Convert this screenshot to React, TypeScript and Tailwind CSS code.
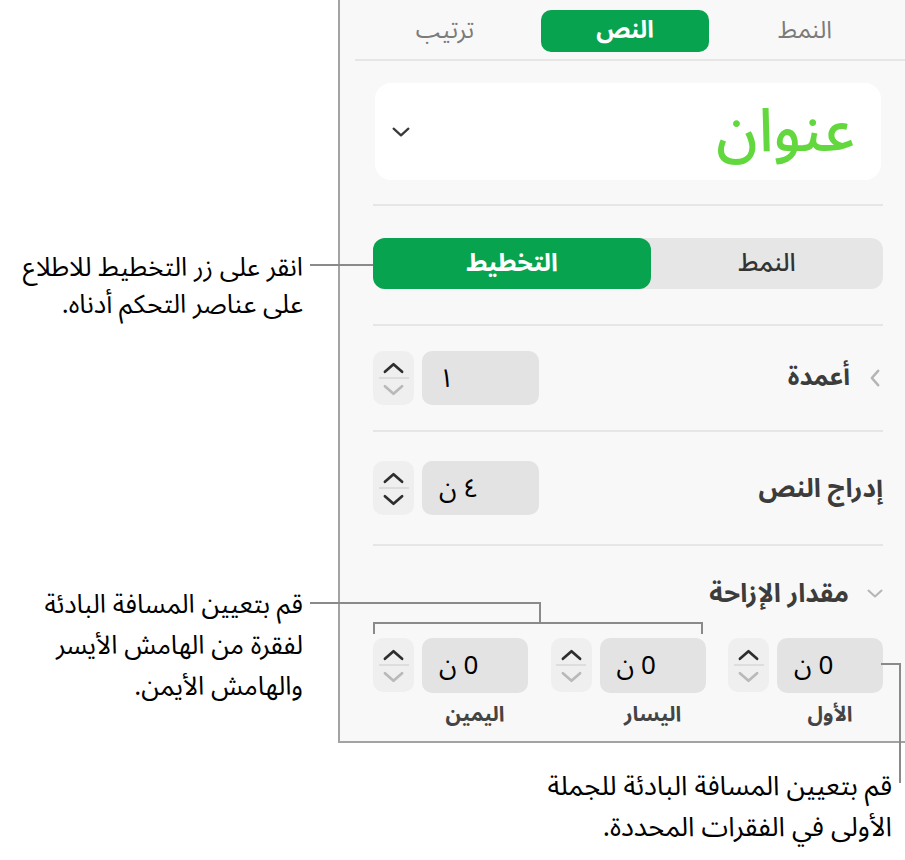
import React from 'react';

const Chevron = ({ dir, className }: { dir: 'up' | 'down' | 'left'; className?: string }) => {
    const pts =
        dir === 'up' ? '2,10 11,2 20,10' : dir === 'down' ? '2,2 11,10 20,2' : '9,2 2,10 9,18';
    const vb = dir === 'left' ? '0 0 11 20' : '0 0 22 12';
    return (
        <svg viewBox={vb} className={className} fill="none" stroke="currentColor" strokeWidth={2.8} strokeLinecap="round" strokeLinejoin="round">
            <polyline points={pts} />
        </svg>
    );
};

const Stepper = ({ downDisabled }: { downDisabled?: boolean }) => (
    <div className="w-[41px] h-[54px] rounded-[10px] bg-[#efefef] flex flex-col items-center">
        <div className="h-[26px] flex items-end pb-[3px]">
            <Chevron dir="up" className="w-[21px] h-[12px] text-[#2e2e2e]" />
        </div>
        <div className="h-[2px] w-[30px] bg-[#dddddd]" />
        <div className="flex-1 flex items-start pt-[5px]">
            <Chevron dir="down" className={`w-[21px] h-[12px] ${downDisabled ? 'text-[#b9b9b9]' : 'text-[#2e2e2e]'}`} />
        </div>
    </div>
);

const Field = ({ value }: { value: string }) => (
    <div className="w-[117px] h-[54px] rounded-[10px] bg-[#e3e3e3] flex items-center justify-end pl-[17px] text-[26px] text-black">
        {value}
    </div>
);

const Divider = ({ className }: { className?: string }) => <div className={`h-[2px] bg-[#e6e6e6] ${className || ''}`} />;

const IndentGroup = ({ label }: { label: string }) => (
    <div className="flex flex-col">
        <div className="flex gap-2">
            <div className="w-[106px] h-[55px] rounded-[10px] bg-[#e3e3e3] flex items-center justify-end pl-[17px] text-[26px] text-black">
                0 ن
            </div>
            <div className="h-[55px] flex">
                <Stepper downDisabled />
            </div>
        </div>
        <div className="w-[106px] mt-[10px] h-[24px] flex items-center justify-center text-[21px] font-bold text-[#444444]">
            {label}
        </div>
    </div>
);

export default function App() {
    return (
        <div className="relative w-[905px] h-[860px] bg-white overflow-hidden font-['Noto_Sans_Arabic','DejaVu_Sans',sans-serif]">
            {/* inspector panel */}
            <div dir="rtl" className="ml-[338px] w-[567px] h-[743px] bg-[#f8f8f8] border-l-2 border-b-2 border-[#a3a3a3]">
                <div className="ml-[15px]">
                    <div className="mr-[10px] h-[59px] pt-[10px] grid grid-cols-3">
                        <div className="h-[42px] flex items-center justify-center text-[24px] text-[#7b7b7b]">النمط</div>
                        <div className="h-[42px] mx-[6px] rounded-[10px] bg-[#08a34f] flex items-center justify-center text-[24px] font-bold text-white">
                            النص
                        </div>
                        <div className="h-[42px] flex items-center justify-center text-[24px] text-[#7b7b7b]">ترتيب</div>
                    </div>
                    <Divider />
                </div>

                <div className="pr-[22px] pl-[33px]">
                    <div className="mt-[22px] mx-[2px] h-[97px] rounded-[16px] bg-white flex items-center justify-between pr-[26px] pl-[17px]">
                        <span className="text-[60px] font-medium text-[#62d83e] leading-none">عنوان</span>
                        <Chevron dir="down" className="w-[18px] h-[10px] text-[#3a3a3a]" />
                    </div>

                    <Divider className="mt-[24px]" />

                    <div className="mt-[32px] h-[51px] rounded-[12px] bg-[#e6e6e6] flex">
                        <div className="flex-1 flex items-center justify-center text-[25px] font-medium text-[#333333]">النمط</div>
                        <div className="w-[278px] rounded-[12px] bg-[#08a34f] flex items-center justify-center text-[25px] font-bold text-white">
                            التخطيط
                        </div>
                    </div>

                    <Divider className="mt-[35px]" />

                    <div className="mt-[25px] h-[54px] flex items-center justify-between">
                        <div className="flex items-center gap-[20px] pr-[3px]">
                            <Chevron dir="left" className="w-[10px] h-[18px] text-[#b5b5b5]" />
                            <span className="text-[25px] font-bold text-[#3c3c3c]">أعمدة</span>
                        </div>
                        <div className="flex gap-2">
                            <Field value="١" />
                            <Stepper downDisabled />
                        </div>
                    </div>

                    <Divider className="mt-[25px]" />

                    <div className="mt-[29px] h-[54px] flex items-center justify-between">
                        <span className="text-[26px] font-bold text-[#3c3c3c]">إدراج النص</span>
                        <div className="flex gap-2">
                            <Field value="٤ ن" />
                            <Stepper />
                        </div>
                    </div>

                    <Divider className="mt-[29px]" />

                    <div className="mt-[35px] h-[24px] flex items-center gap-[18px]">
                        <Chevron dir="down" className="w-[16px] h-[9px] text-[#b5b5b5]" />
                        <span className="text-[26px] font-bold text-[#3c3c3c]">مقدار الإزاحة</span>
                    </div>

                    <div className="mt-[33px] flex justify-between">
                        <IndentGroup label="الأول" />
                        <IndentGroup label="اليسار" />
                        <IndentGroup label="اليمين" />
                    </div>
                </div>
            </div>

            {/* callout 1 */}
            <div className="absolute left-[310px] top-[264px] w-[63px] h-[2px] bg-[#8a8a8a]" />
            <div dir="rtl" className="absolute right-[602px] top-[249px] w-[303px] text-[26px] leading-[37px] text-black">
                <div>انقر على زر التخطيط للاطلاع</div>
                <div>على عناصر التحكم أدناه.</div>
            </div>

            {/* callout 2 */}
            <div className="absolute left-[310px] top-[602px] w-[231px] h-[22px] border-t-2 border-r-2 border-[#8a8a8a]" />
            <div className="absolute left-[373px] top-[622px] w-[330px] h-[12px] border-t-2 border-l-2 border-r-2 border-[#8a8a8a]" />
            <div dir="rtl" className="absolute right-[602px] top-[584px] w-[303px] text-[26px] leading-[41px] text-black">
                <div>قم بتعيين المسافة البادئة</div>
                <div>لفقرة من الهامش الأيسر</div>
                <div>والهامش الأيمن.</div>
            </div>

            {/* callout 3 */}
            <div className="absolute left-[881px] top-[663px] w-[20px] h-[120px] border-t-2 border-r-2 border-[#8a8a8a]" />
            <div dir="rtl" className="absolute right-[13px] top-[766px] w-[380px] text-[27px] leading-[41px] text-black">
                <div>قم بتعيين المسافة البادئة للجملة</div>
                <div>الأولى في الفقرات المحددة.</div>
            </div>
        </div>
    );
}
